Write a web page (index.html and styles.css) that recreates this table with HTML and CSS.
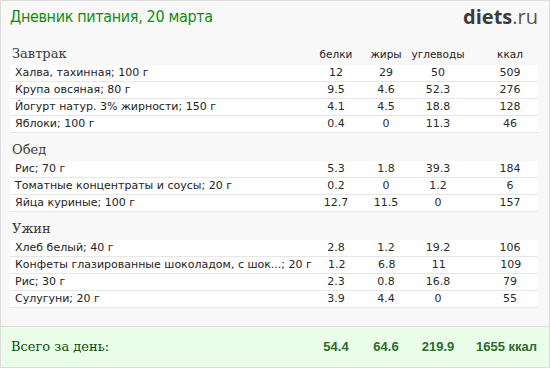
FILE: index.html
```html
<!DOCTYPE html>
<html lang="ru">
<head>
<meta charset="utf-8">
<title>Дневник питания</title>
<link rel="stylesheet" href="styles.css">
</head>
<body>
<div class="page">
  <header class="top">
    <h1 class="title">Дневник питания, 20 марта</h1>
    <div class="logo"><span class="logo-main">diets</span>.ru</div>
  </header>

  <section class="meal">
    <div class="grid meal-head">
      <h2 class="meal-name">Завтрак</h2>
      <span class="col">белки</span><span class="col">жиры</span><span class="col">углеводы</span><span class="col kcal">ккал</span>
    </div>
    <div class="grid row"><span class="name">Халва, тахинная; 100 г</span><span class="col">12</span><span class="col">29</span><span class="col">50</span><span class="col kcal">509</span></div>
    <div class="grid row"><span class="name">Крупа овсяная; 80 г</span><span class="col">9.5</span><span class="col">4.6</span><span class="col">52.3</span><span class="col kcal">276</span></div>
    <div class="grid row"><span class="name">Йогурт натур. 3% жирности; 150 г</span><span class="col">4.1</span><span class="col">4.5</span><span class="col">18.8</span><span class="col kcal">128</span></div>
    <div class="grid row"><span class="name">Яблоки; 100 г</span><span class="col">0.4</span><span class="col">0</span><span class="col">11.3</span><span class="col kcal">46</span></div>
  </section>

  <section class="meal">
    <div class="grid meal-head"><h2 class="meal-name">Обед</h2></div>
    <div class="grid row"><span class="name">Рис; 70 г</span><span class="col">5.3</span><span class="col">1.8</span><span class="col">39.3</span><span class="col kcal">184</span></div>
    <div class="grid row"><span class="name">Томатные концентраты и соусы; 20 г</span><span class="col">0.2</span><span class="col">0</span><span class="col">1.2</span><span class="col kcal">6</span></div>
    <div class="grid row"><span class="name">Яйца куриные; 100 г</span><span class="col">12.7</span><span class="col">11.5</span><span class="col">0</span><span class="col kcal">157</span></div>
  </section>

  <section class="meal">
    <div class="grid meal-head"><h2 class="meal-name">Ужин</h2></div>
    <div class="grid row"><span class="name">Хлеб белый; 40 г</span><span class="col">2.8</span><span class="col">1.2</span><span class="col">19.2</span><span class="col kcal">106</span></div>
    <div class="grid row"><span class="name">Конфеты глазированные шоколадом, с шок...; 20 г</span><span class="col">1.2</span><span class="col">6.8</span><span class="col">11</span><span class="col kcal">109</span></div>
    <div class="grid row"><span class="name">Рис; 30 г</span><span class="col">2.3</span><span class="col">0.8</span><span class="col">16.8</span><span class="col kcal">79</span></div>
    <div class="grid row"><span class="name">Сулугуни; 20 г</span><span class="col">3.9</span><span class="col">4.4</span><span class="col">0</span><span class="col kcal">55</span></div>
  </section>

  <footer class="total">
    <div class="grid total-grid">
      <span class="total-label">Всего за день:</span>
      <span class="col num">54.4</span><span class="col num">64.6</span><span class="col num">219.9</span><span class="num total-kcal">1655 ккал</span>
    </div>
  </footer>
</div>
</body>
</html>
```

FILE: styles.css
```css
* { box-sizing: border-box; }
html, body { margin: 0; padding: 0; }
body {
  background: #f8f8f8;
  font-family: "DejaVu Sans", Verdana, sans-serif;
  color: #222;
}
.page {
  width: 550px;
  height: 368px;
  border: 1px solid #dcdcdc;
  background: #f8f8f8;
  display: flex;
  flex-direction: column;
}
.top {
  height: 36px;
  padding: 6px 11px 0 9px;
  display: flex;
  justify-content: space-between;
  align-items: flex-start;
}
.title {
  margin: 0;
  font-family: "DejaVu Sans Condensed", "DejaVu Sans", sans-serif;
  font-stretch: condensed;
  font-weight: normal;
  font-size: 16px;
  letter-spacing: -0.35px;
  line-height: 20px;
  color: #118a11;
}
.logo {
  font-family: "Open Sans", "DejaVu Sans", sans-serif;
  font-size: 20px;
  line-height: 20px;
  color: #555;
  margin-top: 0;
}
.logo-main { font-weight: bold; color: #3b3b3b; }

.meal { padding: 0 11px 0 9px; }
.grid {
  display: grid;
  grid-template-columns: 1fr 50px 50px 54px 73px;
}
.meal-head {
  height: 28px;
  padding-top: 9px;
  align-items: baseline;
  font-size: 10.5px;
  line-height: 16px;
}
.meal-name {
  margin: 0 0 0 2px;
  font-family: "DejaVu Serif", "Liberation Serif", serif;
  font-weight: normal;
  font-size: 13px;
  line-height: 16px;
  color: #3a3a3a;
}
.col { text-align: center; white-space: nowrap; }
.kcal { padding-left: 17px; }
.row {
  height: 17px;
  background: #fff;
  border-bottom: 1px solid #e6e6e6;
  font-size: 11px;
  line-height: 16px;
  color: #2a2a2a;
}
.name {
  padding-left: 5px;
  white-space: nowrap;
  overflow: visible;
  color: #222;
}

.total {
  margin-top: auto;
  height: 41px;
  border-top: 1px solid #dcdcdc;
  background: #e9fde9;
  padding: 0 11px 0 9px;
}
.total-grid {
  height: 40px;
  padding-top: 12px;
  align-items: baseline;
  line-height: 16px;
}
.total-label {
  padding-left: 1px;
  font-family: "DejaVu Serif", "Liberation Serif", serif;
  font-size: 13px;
  color: #0d4f0d;
}
.num {
  font-family: "Liberation Sans", Arial, sans-serif;
  font-weight: bold;
  font-size: 13px;
  color: #2c6c2c;
}
.total-kcal { text-align: right; padding-right: 1px; white-space: nowrap; }
```
